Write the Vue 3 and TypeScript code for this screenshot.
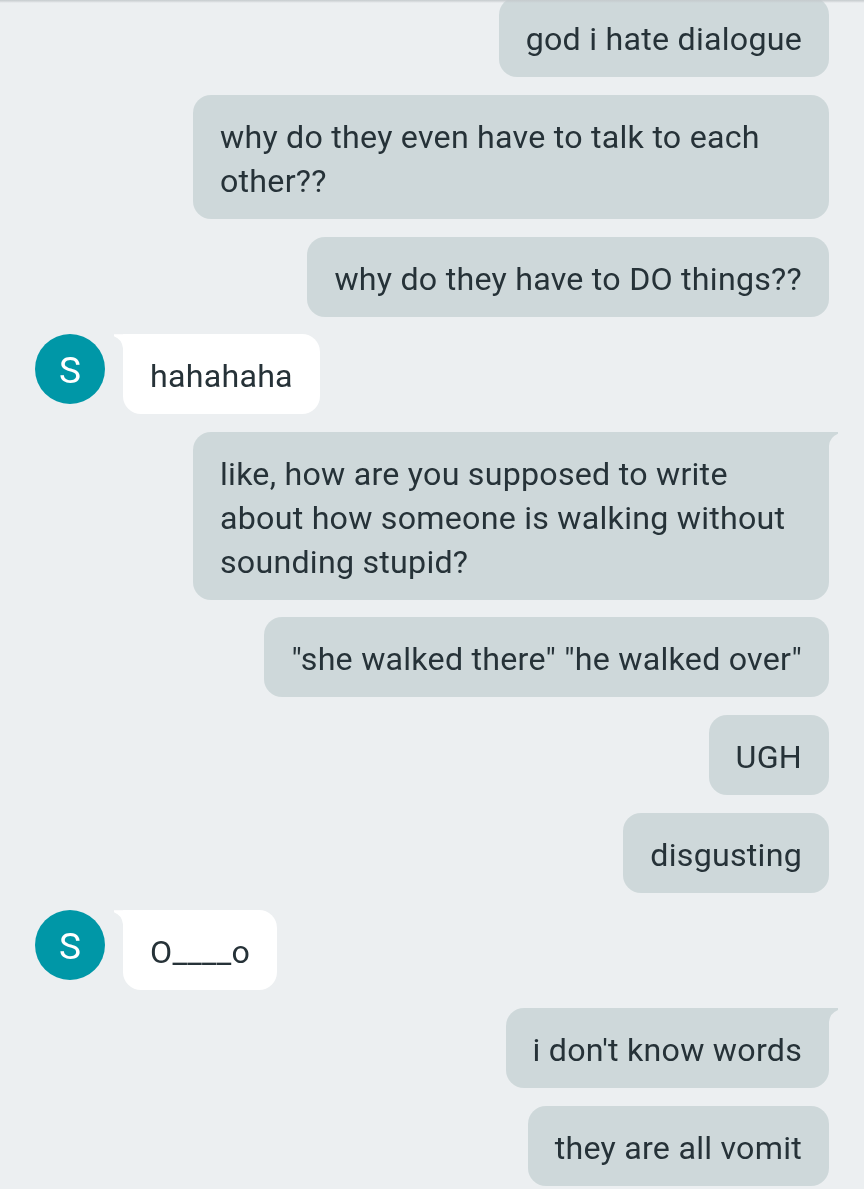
<script setup lang="ts">
interface Message {
  id: number
  text: string
  incoming?: boolean
  tail?: boolean
}

const messages: Message[] = [
  { id: 1, text: 'god i hate dialogue' },
  { id: 2, text: 'why do they even have to talk to each other??' },
  { id: 3, text: 'why do they have to DO things??' },
  { id: 4, text: 'hahahaha', incoming: true, tail: true },
  { id: 5, text: 'like, how are you supposed to write about how someone is walking without sounding stupid?', tail: true },
  { id: 6, text: '"she walked there" "he walked over"' },
  { id: 7, text: 'UGH' },
  { id: 8, text: 'disgusting' },
  { id: 9, text: 'O____o', incoming: true, tail: true },
  { id: 10, text: "i don't know words", tail: true },
  { id: 11, text: 'they are all vomit' },
]
</script>

<template>
  <main class="screen">
    <div class="top-shadow"></div>
    <div class="thread">
      <div
        v-for="m in messages"
        :key="m.id"
        class="row"
        :class="m.incoming ? 'in' : 'out'"
      >
        <div v-if="m.incoming" class="avatar">S</div>
        <div class="bubble" :class="{ tail: m.tail }">{{ m.text }}</div>
      </div>
    </div>
  </main>
</template>

<style>
html, body { margin: 0; background: #eceff1; }
</style>

<style scoped>
.screen {
  position: relative;
  width: 864px;
  height: 1189px;
  overflow: hidden;
  background: #eceff1;
  font-family: Roboto, "Noto Sans", sans-serif;
  color: #263238;
}
.thread {
  box-sizing: border-box;
  padding: 0.36px 35px 0;
  margin-top: -3px;
  display: flex;
  flex-direction: column;
  gap: 17.64px;
  will-change: transform;
}
.top-shadow {
  position: absolute;
  top: 0;
  left: 0;
  right: 0;
  height: 3px;
  background: linear-gradient(#c4c9cc, rgba(236, 239, 241, 0));
  z-index: 2;
}
.row { display: flex; flex: none; }
.row.out { justify-content: flex-end; }
.row.in { gap: 18px; align-items: flex-start; }
.avatar {
  width: 70px;
  height: 70px;
  border-radius: 50%;
  background: #0097a7;
  color: #fff;
  font-size: 37px;
  line-height: 73px;
  text-align: center;
  flex: none;
}
.bubble {
  position: relative;
  box-sizing: border-box;
  max-width: 636px;
  padding: 20px 27px 16px;
  font-size: 32.2px;
  letter-spacing: 0.24px;
  line-height: 44px;
  border-radius: 18px;
}
.out .bubble { background: #ced8da; }
.in .bubble { background: #fff; }
.out .bubble.tail { border-top-right-radius: 0; }
.in .bubble.tail { border-top-left-radius: 0; }
.bubble.tail::after {
  content: "";
  position: absolute;
  top: 0;
  width: 9px;
  height: 14px;
}
.out .bubble.tail::after {
  left: 100%;
  background: #ced8da;
  clip-path: path("M0 0H9V2Q1 5 0 14Z");
}
.in .bubble.tail::after {
  right: 100%;
  background: #fff;
  clip-path: path("M9 0H0V2Q8 5 9 14Z");
}
</style>
